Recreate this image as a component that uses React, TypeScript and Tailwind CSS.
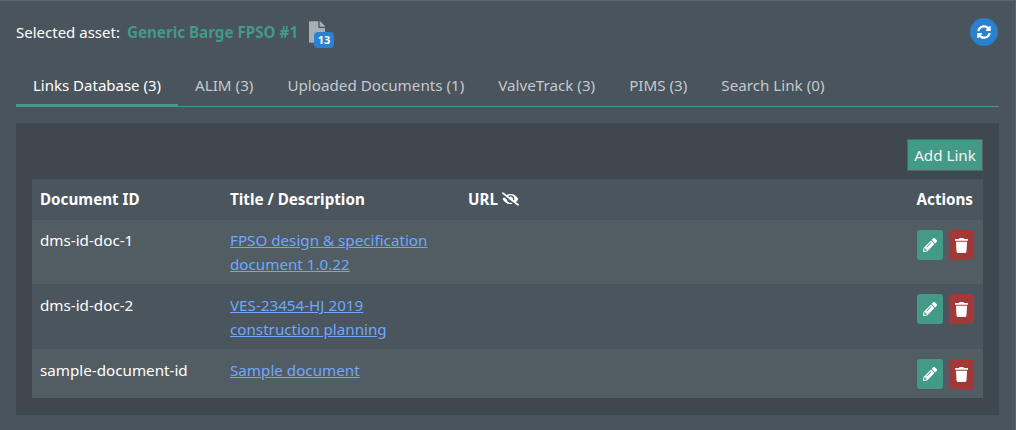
import React from 'react';
import { FaFile, FaSyncAlt, FaEyeSlash, FaPencilAlt, FaTrash } from 'react-icons/fa';

const tabs = [
  { label: 'Links Database (3)', active: true },
  { label: 'ALIM (3)' },
  { label: 'Uploaded Documents (1)' },
  { label: 'ValveTrack (3)' },
  { label: 'PIMS (3)' },
  { label: 'Search Link (0)' },
];

const rows = [
  { id: 'dms-id-doc-1', title: 'FPSO design & specification document 1.0.22', bg: 'bg-[#525d63]', height: 'h-[64px]', pad: 'pt-2' },
  { id: 'dms-id-doc-2', title: 'VES-23454-HJ 2019 construction planning', bg: 'bg-[#4a555d]', height: 'h-[65px]', pad: 'pt-[9px]' },
  { id: 'sample-document-id', title: 'Sample document', bg: 'bg-[#525d63]', height: 'h-[49px]', pad: 'pt-[9px]' },
];

const App: React.FC = () => {
  return (
    <div className="w-[1016px] h-[430px] overflow-hidden bg-[#4a545d] border-t border-r border-[#5a646c] px-4 pt-[15px] text-[15.2px] leading-6 text-white font-['Noto_Sans','Open_Sans',sans-serif]">
      <div className="flex items-center justify-between h-8">
        <div className="flex items-center">
          <span className="text-[15px]">Selected asset:</span>
          <span className="ml-[7px] font-bold text-[#439a86]">Generic Barge FPSO #1</span>
          <span className="relative ml-[11px] w-6 h-8">
            <FaFile className="absolute left-0 top-[5px] w-4 h-[22px] text-[#a9afb4]" />
            <span className="absolute left-[5px] top-4 w-[20px] h-4 rounded-sm bg-[#2b80d0] text-[11px] leading-4 font-bold text-center">13</span>
          </span>
        </div>
        <button className="mr-[1px] w-7 h-7 rounded-full bg-[#2b80d0] flex items-center justify-center">
          <FaSyncAlt className="w-[14px] h-[14px] text-white" />
        </button>
      </div>

      <div className="flex mt-3 h-[47px] border-b border-[#439a86]">
        {tabs.map((tab) => (
          <div
            key={tab.label}
            className={`px-[17px] pt-[13px] h-[47px] ${tab.active ? 'text-[15px] text-white border-b-[3px] border-[#439a86]' : 'text-[#c4c9cd]'}`}
          >
            {tab.label}
          </div>
        ))}
      </div>

      <div className="mt-4 w-[983px] h-[292px] bg-[#3f474f] p-4">
        <div className="flex justify-end h-8">
          <button className="w-[76px] h-8 bg-[#439a86] border border-[#596268] text-[#f2f5f5]">Add Link</button>
        </div>
        <table className="mt-2 w-[951px] table-fixed border-collapse">
          <thead>
            <tr className="h-[41px] bg-[#4a555d] font-bold text-left">
              <th className="w-[190px] pl-2 pb-[2px]">Document ID</th>
              <th className="w-[238px] pl-2 pb-[2px]">Title / Description</th>
              <th className="pl-2 pb-[2px]">
                <span className="flex items-center gap-1">
                  URL <FaEyeSlash className="w-[17px] h-[14px]" />
                </span>
              </th>
              <th className="w-[120px] pr-[10px] pb-[2px] text-right">Actions</th>
            </tr>
          </thead>
          <tbody>
            {rows.map((row) => (
              <tr key={row.id} className={`${row.bg} ${row.height} align-top`}>
                <td className={`pl-2 ${row.pad}`}>{row.id}</td>
                <td className={`pl-2 ${row.pad}`}>
                  <a href="#" className="block w-[215px] text-[#6ea8fe] underline">{row.title}</a>
                </td>
                <td />
                <td className="pt-[10px] pr-[9px]">
                  <div className="flex justify-end gap-[6px]">
                    <button className="w-[26px] h-[30px] rounded-[3px] bg-[#439a86] flex items-center justify-center">
                      <FaPencilAlt className="w-[14px] h-[14px]" />
                    </button>
                    <button className="w-[25px] h-[30px] rounded-[3px] bg-[#a33838] flex items-center justify-center">
                      <FaTrash className="w-[13px] h-[15px]" />
                    </button>
                  </div>
                </td>
              </tr>
            ))}
          </tbody>
        </table>
      </div>
    </div>
  );
};

export default App;
